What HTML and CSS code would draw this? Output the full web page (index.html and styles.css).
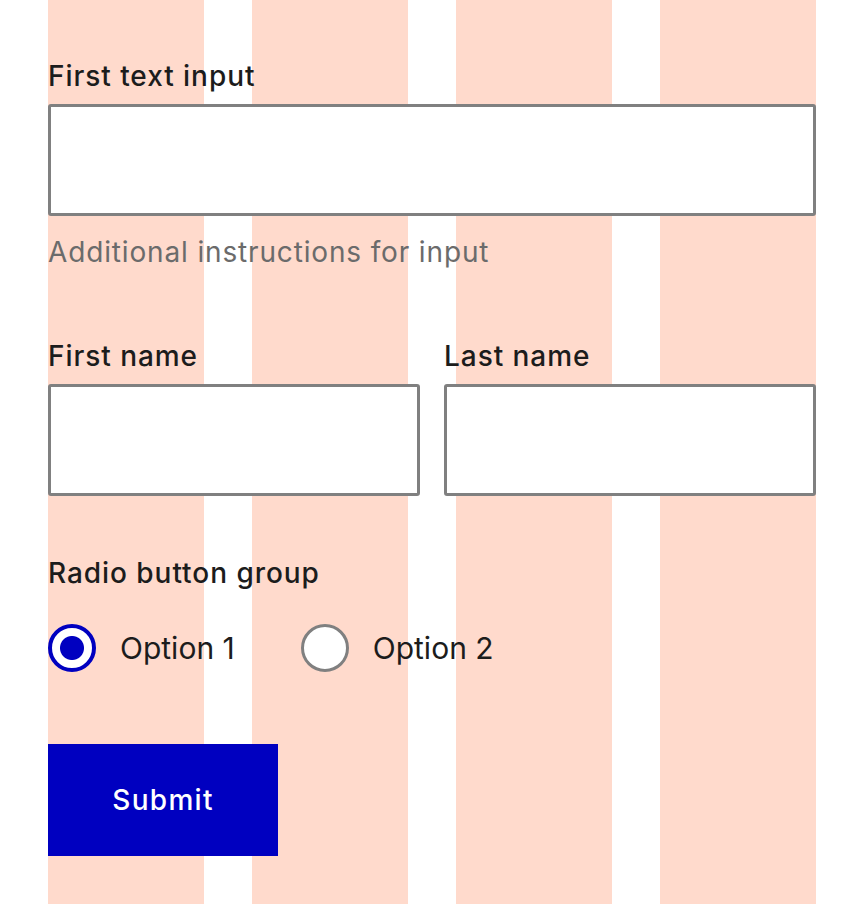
FILE: index.html
```html
<!DOCTYPE html>
<html lang="en">
<head>
<meta charset="utf-8">
<title>Form</title>
<link rel="stylesheet" href="styles.css">
</head>
<body>
<form class="page">
  <div class="field">
    <label class="label" for="first-input">First text input</label>
    <input class="text-input" id="first-input" type="text">
    <p class="hint">Additional instructions for input</p>
  </div>
  <div class="name-row">
    <div class="field">
      <label class="label" for="first-name">First name</label>
      <input class="text-input" id="first-name" type="text">
    </div>
    <div class="field">
      <label class="label" for="last-name">Last name</label>
      <input class="text-input" id="last-name" type="text">
    </div>
  </div>
  <fieldset class="radio-group">
    <legend class="label">Radio button group</legend>
    <div class="radio-options">
      <label class="radio-option"><input class="radio" type="radio" name="opt" checked><span>Option 1</span></label>
      <label class="radio-option"><input class="radio" type="radio" name="opt"><span>Option 2</span></label>
    </div>
  </fieldset>
  <button class="submit" type="button">Submit</button>
</form>
</body>
</html>
```
FILE: styles.css
```css
html, body {
  margin: 0;
  padding: 0;
  background: #fff;
}
body {
  font-family: Inter, "Liberation Sans", sans-serif;
  color: #1c1c1c;
}
.page {
  box-sizing: border-box;
  width: 768px;
  min-height: 904px;
  margin: 0 0 0 48px;
  padding-top: 58px;
  background: repeating-linear-gradient(to right, #ffdacc 0 156px, #ffffff 156px 204px);
  display: flex;
  flex-direction: column;
}
.label {
  display: block;
  font-size: 28px;
  line-height: 36px;
  font-weight: 500;
  letter-spacing: 0.95px;
  color: #1c1c1c;
  margin: 0 0 10px 0;
  padding: 0;
}
.text-input {
  display: block;
  box-sizing: border-box;
  width: 100%;
  height: 112px;
  margin: 0;
  border: 3px solid #808080;
  border-radius: 3px;
  background: #fff;
  font: inherit;
}
.hint {
  margin: 18px 0 0 0;
  font-size: 28px;
  line-height: 36px;
  letter-spacing: 0.85px;
  color: #6b6b6b;
}
.name-row {
  margin-top: 68px;
  display: grid;
  grid-template-columns: 1fr 1fr;
  gap: 24px;
}
.radio-group {
  margin: 59px 0 0 0;
  padding: 0;
  border: 0;
  min-width: 0;
}
.radio-group legend {
  float: left;
  width: 100%;
  margin-bottom: 0;
}
.radio-options {
  clear: both;
  padding-top: 33px;
  display: flex;
  gap: 66px;
}
.radio-option {
  display: flex;
  align-items: center;
  gap: 24px;
  font-size: 30px;
  line-height: 48px;
  color: #1c1c1c;
}
.radio {
  appearance: none;
  -webkit-appearance: none;
  box-sizing: border-box;
  width: 48px;
  height: 48px;
  margin: 0;
  border: 3px solid #808080;
  border-radius: 50%;
  background: #fff;
}
.radio:checked {
  border: 4px solid #0000c0;
  background: radial-gradient(circle, #0000c0 0 11.5px, #fff 12.5px);
}
.submit {
  margin-top: 72px;
  align-self: flex-start;
  width: 230px;
  height: 112px;
  border: 0;
  border-radius: 0;
  background: #0000c0;
  color: #fff;
  font-family: inherit;
  font-size: 28px;
  font-weight: 500;
  letter-spacing: 1.3px;
  padding: 0;
}
```
